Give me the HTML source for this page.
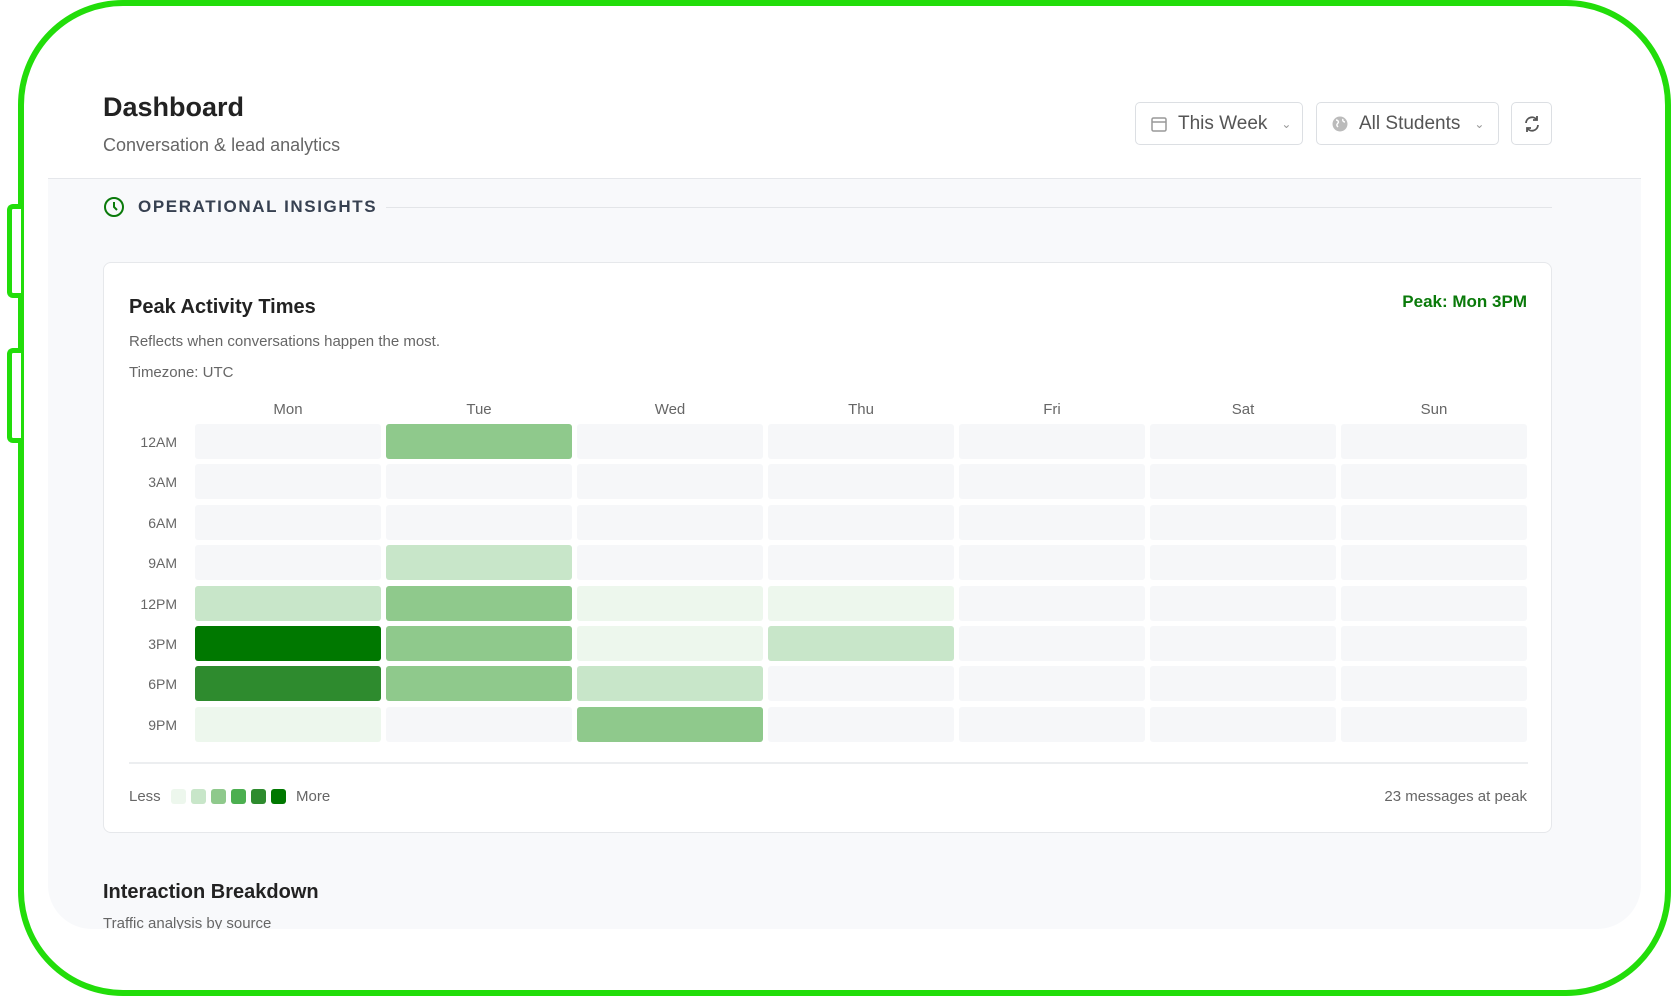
<!DOCTYPE html>
<html><head><meta charset="utf-8"><style>
*{box-sizing:border-box;margin:0;padding:0}
body{width:1671px;height:996px;background:#fff;font-family:"Liberation Sans",sans-serif;position:relative;overflow:hidden}
.frame{position:absolute;left:18px;top:0;width:1653px;height:996px;border:6px solid #22dd0a;border-radius:105px}
.side{position:absolute;left:7px;width:14px;border:5px solid #22dd0a;border-right:none;border-radius:6px 0 0 6px;background:#fff}
.panel{position:absolute;left:48px;top:178px;width:1593px;height:751px;background:#f8f9fb;border-top:1px solid #e5e7eb;border-radius:0 0 44px 44px}
.abs{position:absolute}
.btn{position:absolute;top:102px;height:43px;border:1px solid #dcdfe3;border-radius:5px;background:#fff;color:#555;font-size:19px;display:flex;align-items:center}
.card{position:absolute;left:103px;top:262px;width:1449px;height:571px;background:#fff;border:1px solid #e6e8eb;border-radius:8px}
.cell{position:absolute;height:35px;border-radius:3px}
.lbl{position:absolute;font-size:14px;color:#666}
</style></head><body>
<div class="frame"></div>
<div class="side" style="top:204px;height:94px"></div>
<div class="side" style="top:348px;height:95px"></div>

<div class="abs" style="left:103px;top:92px;font-size:27px;font-weight:bold;color:#222">Dashboard</div>
<div class="abs" style="left:103px;top:135px;font-size:18px;color:#666">Conversation &amp; lead analytics</div>

<div class="btn" style="left:1135px;width:168px">
<svg style="margin-left:14px" width="18" height="18" viewBox="0 0 18 18"><rect x="2" y="3" width="14" height="13" rx="1.5" fill="none" stroke="#999" stroke-width="1.5"/><line x1="2" y1="7" x2="16" y2="7" stroke="#999" stroke-width="1.5"/></svg>
<span style="margin-left:10px">This Week</span><span style="margin-left:14px;font-size:12px;color:#999">&#8964;</span></div>
<div class="btn" style="left:1316px;width:183px">
<svg style="margin-left:14px" width="18" height="18" viewBox="0 0 18 18"><circle cx="9" cy="9" r="7.5" fill="#bbb"/><path d="M5 5c2 0 3 2 2 3s-2 2 0 4M12 4c-1 2 1 3 2 3" stroke="#fff" stroke-width="1.4" fill="none"/></svg>
<span style="margin-left:10px">All Students</span><span style="margin-left:14px;font-size:12px;color:#999">&#8964;</span></div>
<div class="btn" style="left:1511px;width:41px;justify-content:center">
<svg width="20" height="20" viewBox="0 0 20 20" fill="none" stroke="#555" stroke-width="1.8"><path d="M4 9a6 6 0 0 1 11-3"/><path d="M16 11a6 6 0 0 1-11 3"/><path d="M15 2v4h-4M5 18v-4h4"/></svg></div>

<div class="panel"></div>
<svg class="abs" style="left:103px;top:196px" width="22" height="22" viewBox="0 0 22 22" fill="none" stroke="#0a7a0a" stroke-width="2"><circle cx="11" cy="11" r="9"/><path d="M11 6v5l3 3"/></svg>
<div class="abs" style="left:138px;top:197px;font-size:17px;letter-spacing:1.6px;color:#374151;font-weight:bold">OPERATIONAL INSIGHTS</div>
<div class="abs" style="left:386px;top:207px;width:1166px;height:1px;background:#e3e5e8"></div>

<div class="card">
<div class="abs" style="left:25px;top:33px;font-size:20px;font-weight:bold;color:#222">Peak Activity Times</div>
<div class="abs" style="right:24px;top:29px;font-size:17px;font-weight:bold;color:#0a7a0a">Peak: Mon 3PM</div>
<div class="abs" style="left:25px;top:70px;font-size:15px;color:#666">Reflects when conversations happen the most.</div>
<div class="abs" style="left:25px;top:101px;font-size:15px;color:#666">Timezone: UTC</div>
<div id="g"></div>
<div class="abs" style="left:25px;top:499px;width:1399px;height:2px;background:#eceef0"></div>
<div class="abs" style="left:25px;top:525px;font-size:15px;color:#666">Less</div>
<div class="abs" style="left:67px;top:526px;width:15px;height:15px;border-radius:3px;background:#edf7ed"></div>
<div class="abs" style="left:87px;top:526px;width:15px;height:15px;border-radius:3px;background:#c8e6c9"></div>
<div class="abs" style="left:107px;top:526px;width:15px;height:15px;border-radius:3px;background:#8fc98c"></div>
<div class="abs" style="left:127px;top:526px;width:15px;height:15px;border-radius:3px;background:#4caf50"></div>
<div class="abs" style="left:147px;top:526px;width:15px;height:15px;border-radius:3px;background:#2e8b2e"></div>
<div class="abs" style="left:167px;top:526px;width:15px;height:15px;border-radius:3px;background:#007800"></div>
<div class="abs" style="left:192px;top:525px;font-size:15px;color:#666">More</div>
<div class="abs" style="right:24px;top:525px;font-size:15px;color:#666">23 messages at peak</div>
</div>

<div class="abs" style="left:103px;top:881px;font-size:20px;font-weight:bold;color:#222">Interaction Breakdown</div>
<div class="abs" style="left:103px;top:914px;height:15px;overflow:hidden;font-size:15px;color:#666;line-height:20px">Traffic analysis by source</div>

<script>
var days=["Mon","Tue","Wed","Thu","Fri","Sat","Sun"],hrs=["12AM","3AM","6AM","9AM","12PM","3PM","6PM","9PM"];
var c=["#f6f7f9","#edf7ed","#c8e6c9","#8fc98c","#4caf50","#2e8b2e","#007800"];
var d=[[0,3,0,0,0,0,0],[0,0,0,0,0,0,0],[0,0,0,0,0,0,0],[0,2,0,0,0,0,0],[2,3,1,1,0,0,0],[6,3,1,2,0,0,0],[5,3,2,0,0,0,0],[1,0,3,0,0,0,0]];
var h="";
for(var j=0;j<7;j++)h+='<div class="lbl" style="left:'+(91+j*191)+'px;top:138px;width:186px;text-align:center;font-size:15px">'+days[j]+'</div>';
for(var i=0;i<8;i++){h+='<div class="lbl" style="left:0;width:73px;text-align:right;top:'+(171+i*40.4)+'px">'+hrs[i]+'</div>';
for(var j=0;j<7;j++)h+='<div class="cell" style="left:'+(91+j*191)+'px;width:186px;top:'+(161+i*40.4)+'px;background:'+c[d[i][j]]+'"></div>';}
document.getElementById("g").innerHTML=h;
</script>
</body></html>
